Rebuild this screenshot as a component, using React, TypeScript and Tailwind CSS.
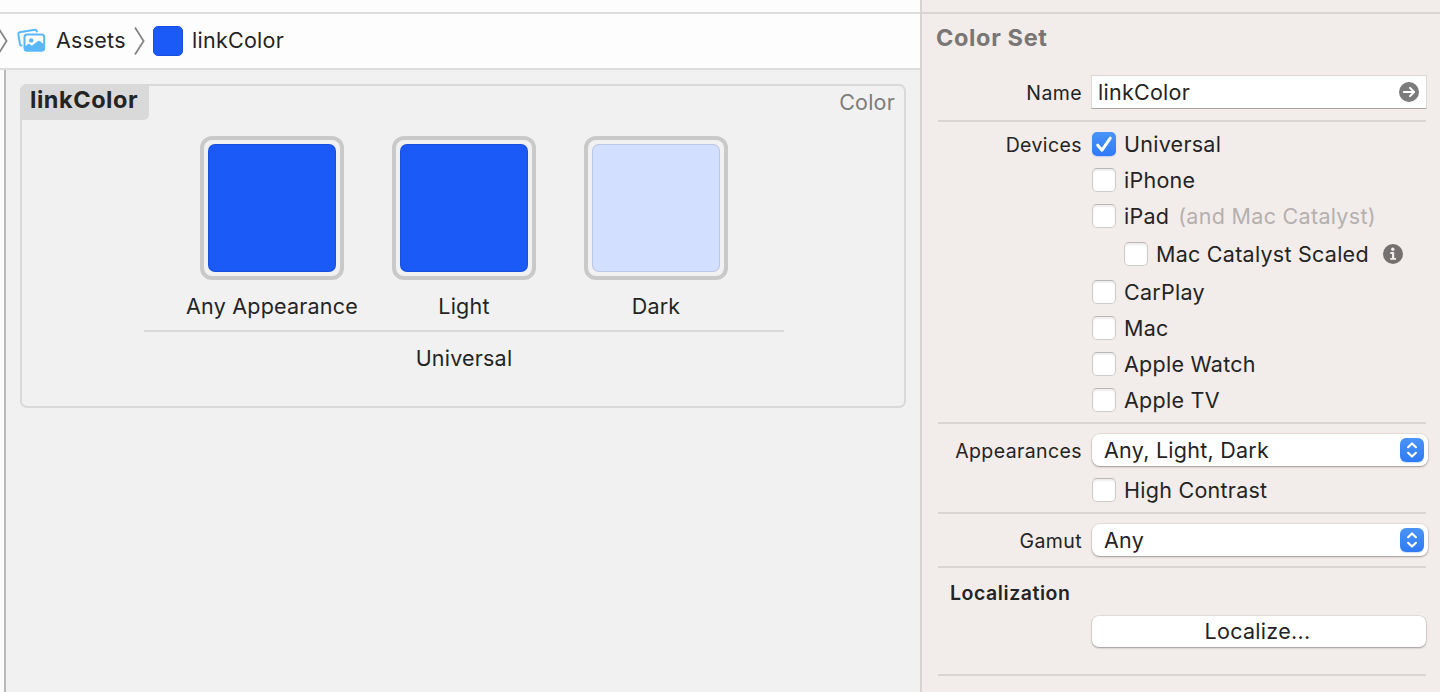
import type { ReactNode } from 'react';

const BODY = 'text-[21.5px] tracking-[0.26px]';

function Chevron() {
  return (
    <svg className="shrink-0" width="11" height="28" viewBox="0 0 11 28" fill="none" stroke="#858585" strokeWidth="1.8">
      <path d="M1 0.5L9.6 14L1 27.5" />
    </svg>
  );
}

function AssetsIcon() {
  return (
    <svg className="shrink-0 overflow-visible" width="28" height="24" viewBox="0 0 28 24" fill="none">
      <path
        d="M5.3 16.6 L4.7 16.6 Q3.3 16.7 3 15.2 L1.3 5.2 Q1.1 3.6 2.7 3.2 L17.7 0.8 Q19.3 0.5 19.8 2.1 L20.1 3.2"
        stroke="#5ab8fa"
        strokeWidth="2"
      />
      <rect x="7.5" y="5.6" width="19.7" height="16" rx="2.6" stroke="#5ab8fa" strokeWidth="2" />
      <circle cx="14.2" cy="11.4" r="2.2" fill="#5ab8fa" />
      <path d="M7 18.2 L10.8 15.2 Q11.8 14.4 12.8 15.2 L14.8 16.8 L20.7 12.2 Q21.9 11.3 23.1 12.2 L27.4 15.8 V19.8 Q27.4 22.4 25 22.4 H9.4 Q7 22.4 7 19.8 Z" fill="#5ab8fa" />
    </svg>
  );
}

function Swatch({ color, label }: { color: string; label: string }) {
  return (
    <div className="flex w-48 flex-col items-center">
      <div className="h-36 w-36 shrink-0 rounded-xl border-4 border-[#c9c9c9] p-1">
        <div className={`h-full w-full rounded-[7px] border border-black/10 ${color}`} />
      </div>
      <div className="mt-[11px] h-[30px] text-[21.5px] leading-[30px] tracking-[0.2px]">{label}</div>
    </div>
  );
}

function Box({ checked = false }: { checked?: boolean }) {
  if (checked) {
    return (
      <div className="h-6 w-6 shrink-0 rounded-[5px] bg-linear-to-b from-[#4a94f8] to-[#2f7af6] shadow-[0_1px_1px_rgba(0,90,255,0.2)]">
        <svg width="24" height="24" viewBox="0 0 24 24" fill="none" stroke="white" strokeWidth="3" strokeLinecap="round" strokeLinejoin="round">
          <path d="M5.7 13.2L10 18.2L18.3 6.2" />
        </svg>
      </div>
    );
  }
  return (
    <div className="h-6 w-6 shrink-0 rounded-[5px] border border-[#cfcbc9] border-t-[#bbb7b5] bg-white shadow-[inset_0_2px_2px_rgba(0,0,0,0.07)]" />
  );
}

function Check({ label, checked, children, className = 'h-9' }: { label: string; checked?: boolean; children?: ReactNode; className?: string }) {
  return (
    <div className={`flex items-center ${className}`}>
      <Box checked={checked} />
      <span className={`ml-2 ${BODY}`}>{label}</span>
      {children}
    </div>
  );
}

function Row({ label, children, className, labelClass }: { label: string; children: ReactNode; className: string; labelClass: string }) {
  return (
    <div className={`flex border-b-2 border-[#d9d5d2] ${className}`}>
      <div className={`w-[144px] shrink-0 text-right text-[19.5px] tracking-[0.4px] ${labelClass}`}>{label}</div>
      <div className="ml-2.5 flex flex-1 flex-col">{children}</div>
    </div>
  );
}

function Select({ value }: { value: string }) {
  return (
    <div className="-mr-0.5 flex h-8 shrink-0 items-center justify-between rounded-[8px] bg-white pr-1 pl-3 shadow-[0_0_0_1px_rgba(0,0,0,0.05),0_1px_2px_rgba(0,0,0,0.32)]">
      <span className={BODY}>{value}</span>
      <div className="h-6 w-6 rounded-[6px] bg-linear-to-b from-[#4a94f8] to-[#2f7af6] shadow-[0_1px_1px_rgba(0,90,255,0.2)]">
        <svg width="24" height="24" viewBox="0 0 24 24" fill="none" stroke="white" strokeWidth="2.2" strokeLinecap="round" strokeLinejoin="round">
          <path d="M8.1 9.2L12 5.5L15.9 9.2M8.1 14.8L12 18.5L15.9 14.8" />
        </svg>
      </div>
    </div>
  );
}

export default function App() {
  return (
    <div className="flex h-[692px] w-[1440px] overflow-hidden bg-[#f1f1f1] font-['Inter','Liberation_Sans',sans-serif] whitespace-nowrap text-[#242424]">
      <main className="flex w-[922px] shrink-0 flex-col border-r-2 border-[#d8d4d2]">
        <div className="h-3.5 shrink-0 border-b-2 border-[#dedede] bg-[#fdfdfd]" />
        <nav className="flex h-14 shrink-0 items-center border-b-2 border-[#dedede] bg-[#fdfdfd] pb-px">
          <div className="-ml-[3px] flex">
            <Chevron />
          </div>
          <div className="ml-[9px] flex">
            <AssetsIcon />
          </div>
          <span className={`ml-[11px] w-[78px] ${BODY}`}>Assets</span>
          <Chevron />
          <div className="ml-2 h-[30px] w-[30px] rounded-[5px] border border-[#1a50e0] bg-[#1b5af7]" />
          <span className={`ml-[9px] ${BODY}`}>linkColor</span>
        </nav>
        <div className="flex flex-1">
          <div className="w-1.5 border-r-2 border-[#b9b9b9] bg-[#fbfbfb]" />
          <section className="mt-3.5 ml-3.5 flex h-[324px] w-[886px] flex-col rounded-[7px] border-2 border-[#d9d9d9]">
            <div className="-mt-0.5 -ml-0.5 flex h-9 shrink-0 justify-between">
              <h2 className="h-9 w-[129px] rounded-tl-[7px] rounded-br-[5px] bg-[#d9d9d9] pl-2.5 text-[23.5px] leading-[32px] font-bold tracking-[0.55px]">linkColor</h2>
              <span className="pt-[3px] pr-[9px] text-[21.5px] leading-[30px] tracking-[0.2px] text-[#7c7c7c]">Color</span>
            </div>
            <div className="mt-4 ml-[122px] flex h-[196px] w-[640px] shrink-0 justify-center border-b-2 border-[#d9d9d9]">
              <Swatch color="bg-[#1b5af7]" label="Any Appearance" />
              <Swatch color="bg-[#1b5af7]" label="Light" />
              <Swatch color="bg-[#d2dfff]" label="Dark" />
            </div>
            <div className="ml-[122px] w-[640px] text-center text-[21.5px] leading-[52px] tracking-[0.2px]">Universal</div>
          </section>
        </div>
      </main>

      <aside className="flex flex-1 flex-col bg-[#f2ecea]">
        <div className="h-3.5 shrink-0 border-b-2 border-[#d9d5d2]" />
        <h1 className="h-[62px] shrink-0 pl-3.5 text-[23.5px] leading-[47px] font-bold tracking-[0.65px] text-[#787776]">Color Set</h1>
        <div className="flex flex-col pr-3.5 pl-4">
          <Row label="Name" className="h-[46px]" labelClass="leading-[34px]">
            <div className="-mt-px -mr-px -ml-px flex h-[34px] shrink-0 items-center justify-between border border-t-[#dcd8d6] border-r-[#dcd8d6] border-b-[#a9a6a5] border-l-[#dcd8d6] bg-white pr-[7px] pl-1.5">
              <span className={BODY}>linkColor</span>
              <svg width="20" height="20" viewBox="0 0 20 20" fill="none">
                <circle cx="10" cy="10" r="10" fill="#7b7b7b" />
                <path d="M4.8 10H15M11 5.9L15.1 10L11 14.1" stroke="white" strokeWidth="2" strokeLinecap="round" strokeLinejoin="round" />
              </svg>
            </div>
          </Row>
          <Row label="Devices" className="h-[302px]" labelClass="leading-[46px]">
            <div className="pt-1">
              <Check label="Universal" checked />
              <Check label="iPhone" />
              <Check label="iPad">
                <span className="ml-[9px] text-[21.5px] tracking-[0.3px] text-[#b5b0ae]">(and Mac Catalyst)</span>
              </Check>
              <Check label="Mac Catalyst Scaled" className="h-10 pl-8">
                <svg className="ml-3.5" width="20" height="20" viewBox="0 0 20 20">
                  <circle cx="10" cy="10" r="10" fill="#757170" />
                  <circle cx="9.8" cy="5.2" r="1.7" fill="#f2ecea" />
                  <path d="M7.3 8.1H11.2V13.9H13V15.8H7.2V13.9H9V10H7.3Z" fill="#f2ecea" />
                </svg>
              </Check>
              <Check label="CarPlay" />
              <Check label="Mac" />
              <Check label="Apple Watch" />
              <Check label="Apple TV" />
            </div>
          </Row>
          <Row label="Appearances" className="h-[90px]" labelClass="leading-[54px]">
            <div className="h-2.5 shrink-0" />
            <Select value="Any, Light, Dark" />
            <Check label="High Contrast" className="mt-1.5 h-9" />
          </Row>
          <Row label="Gamut" className="h-[54px]" labelClass="leading-[54px]">
            <div className="h-2.5 shrink-0" />
            <Select value="Any" />
          </Row>
          <div className="flex h-[108px] flex-col border-b-2 border-[#d9d5d2]">
            <h3 className="h-12 pl-3 text-[19.5px] leading-[50px] font-semibold tracking-[0.55px]">Localization</h3>
            <button className="ml-[154px] h-[31px] rounded-[7px] bg-white pr-[3px] text-[21.5px] leading-[31px] tracking-[0.3px] shadow-[0_0_0_1px_rgba(0,0,0,0.05),0_1px_2px_rgba(0,0,0,0.32)]">
              Localize...
            </button>
          </div>
        </div>
      </aside>
    </div>
  );
}
